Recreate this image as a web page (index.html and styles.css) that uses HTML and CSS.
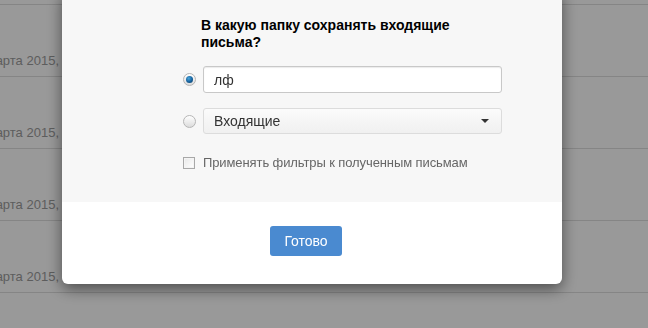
FILE: index.html
```html
<!DOCTYPE html>
<html lang="ru">
<head>
    <meta charset="UTF-8">
    <title>Сбор почты</title>
    <link rel="stylesheet" href="styles.css">
</head>
<body>
    <!-- Список писем под окном -->
    <div class="mail-list">
        <div class="mail-row"><div class="date"><span>12 марта 2015,</span></div></div>
        <div class="mail-row"><div class="date"><span>12 марта 2015,</span></div></div>
        <div class="mail-row"><div class="date"><span>11 марта 2015,</span></div></div>
        <div class="mail-row"><div class="date"><span>11 марта 2015,</span></div></div>
        <div class="mail-row"><div class="date"><span>10 марта 2015,</span></div></div>
    </div>

    <div class="overlay"></div>

    <!-- Окно выбора папки -->
    <div class="modal">
        <div class="modal-body">
            <h3 class="title">В какую папку сохранять входящие письма?</h3>
            <div class="option">
                <span class="radio checked"></span>
                <input type="text" class="field" value="лф">
            </div>
            <div class="option">
                <span class="radio"></span>
                <div class="select">Входящие<span class="caret"></span></div>
            </div>
            <label class="check">
                <span class="checkbox"></span>
                Применять фильтры к полученным письмам
            </label>
        </div>
        <div class="modal-footer">
            <button class="btn-primary">Готово</button>
        </div>
    </div>
</body>
</html>
```

FILE: styles.css
```css
body {
    margin: 0;
    font-family: "Liberation Sans", Arial, sans-serif;
    background: #fff;
    overflow: hidden;
}
.mail-list {
    margin-top: -67px;
}
.mail-row {
    height: 71px;
    border-bottom: 1px solid #dedede;
    display: flex;
    align-items: flex-end;
}
.date {
    width: 59px;
    display: flex;
    justify-content: flex-end;
    font-size: 13px;
    color: #9c9c9c;
    height: 16px;
    line-height: 16px;
    margin-bottom: 7px;
}
.date span {
    white-space: nowrap;
}
.overlay {
    position: fixed;
    top: 0;
    left: 0;
    right: 0;
    bottom: 0;
    background: rgba(0, 0, 0, 0.4);
}
.modal {
    position: fixed;
    top: -10px;
    left: 62px;
    width: 500px;
    background: #fff;
    border-radius: 6px;
    box-shadow: 0 5px 15px rgba(0, 0, 0, 0.5);
    overflow: hidden;
}
.modal-body {
    background: #f7f7f7;
    padding: 27px 60px 31px 120px;
}
.title {
    margin: 0 0 0 19px;
    font-size: 14px;
    line-height: 17px;
    font-weight: bold;
    color: #000;
    width: 290px;
}
.option {
    display: flex;
    align-items: center;
    gap: 7px;
    margin-top: 15px;
}
.radio {
    width: 11px;
    height: 11px;
    border: 1px solid #b5b5b5;
    border-radius: 50%;
    background: linear-gradient(#fff, #dcdcdc);
    flex: none;
    display: flex;
    align-items: center;
    justify-content: center;
    margin-left: 1px;
}
.radio.checked::after {
    content: "";
    width: 7px;
    height: 7px;
    border-radius: 50%;
    background: radial-gradient(circle at 40% 35%, #4aa6dc, #15609c 55%, #0c3a5e);
}
.field {
    flex: 1;
    box-sizing: border-box;
    height: 27px;
    border: 1px solid #c8c8c8;
    border-radius: 3px;
    box-shadow: inset 0 1px 1px rgba(0, 0, 0, 0.08);
    padding: 0 10px;
    font: 14px "Liberation Sans", Arial, sans-serif;
    color: #333;
    background: #fff;
    margin: 0;
}
.select {
    flex: 1;
    box-sizing: border-box;
    height: 26px;
    border: 1px solid #dcdcdc;
    border-radius: 3px;
    background: linear-gradient(#fbfbfb, #f0f0f0);
    padding: 0 10px;
    font-size: 14px;
    line-height: 24px;
    color: #333;
    display: flex;
    justify-content: space-between;
    align-items: center;
}
.caret {
    width: 0;
    height: 0;
    border-left: 4px solid transparent;
    border-right: 4px solid transparent;
    border-top: 4px solid #333;
    margin-right: 2px;
}
.check {
    display: flex;
    align-items: center;
    gap: 8px;
    margin-top: 21px;
    font-size: 13px;
    line-height: 16px;
    letter-spacing: -0.1px;
    color: #666;
}
.checkbox {
    width: 10px;
    height: 10px;
    border: 1px solid #a8a8a8;
    background: linear-gradient(135deg, #e8e8e8, #fff);
    box-shadow: inset 0 0 0 1px #f4f4f4;
    flex: none;
    margin-left: 1px;
}
.modal-footer {
    display: flex;
    justify-content: center;
    padding: 24px 12px 28px 0;
}
.btn-primary {
    width: 72px;
    height: 30px;
    border: none;
    border-radius: 3px;
    background: #4a8ad0;
    color: #fff;
    font: 14px "Liberation Sans", Arial, sans-serif;
    padding: 0;
}
```
